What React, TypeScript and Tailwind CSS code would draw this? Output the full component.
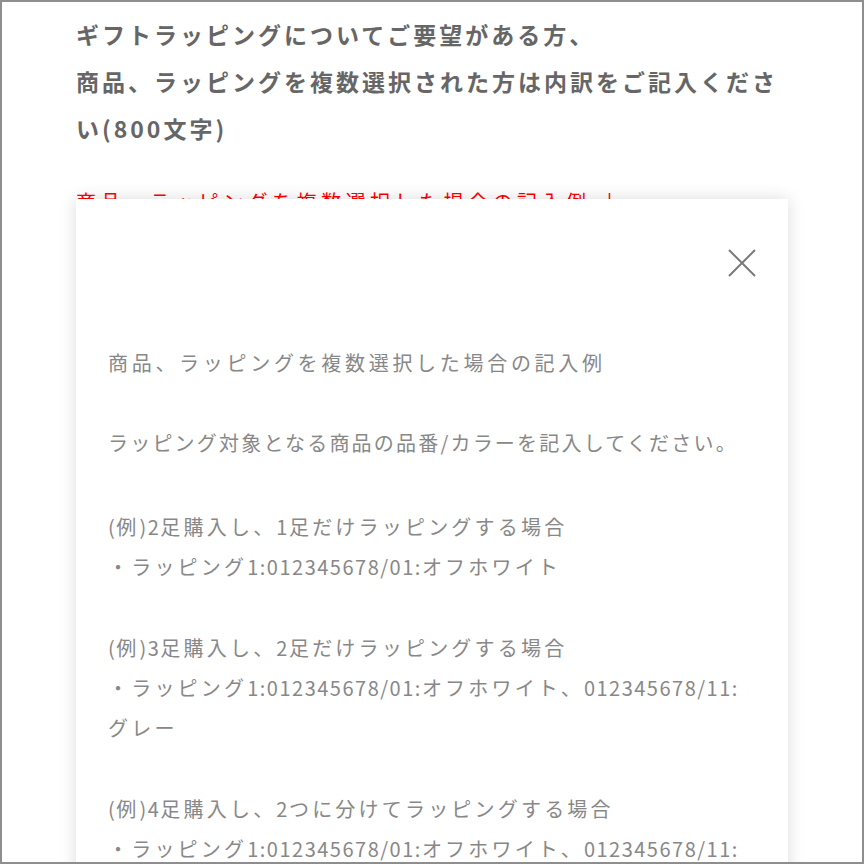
const jp = "font-['Noto_Sans_CJK_JP','Noto_Sans',sans-serif]";

function CloseIcon() {
  return (
    <svg width="28" height="28" viewBox="0 0 28 28" fill="none" aria-hidden="true">
      <path d="M1 1L27 27M27 1L1 27" stroke="#7a7a7a" strokeWidth="2" />
    </svg>
  );
}

// latin runs sit tighter than the kana around them
function Mixed({ text }: { text: string }) {
  const parts = text.split(/([\x21-\x7e]+)/);
  return (
    <>
      {parts.map((p, i) =>
        i % 2 === 1 ? (
          <span key={i} className="tracking-[1.5px]">
            {p}
          </span>
        ) : (
          p
        ),
      )}
    </>
  );
}

const examples = [
  {
    title: '(例)2足購入し、1足だけラッピングする場合',
    line: '・ラッピング1:012345678/01:オフホワイト',
  },
  {
    title: '(例)3足購入し、2足だけラッピングする場合',
    line: '・ラッピング1:012345678/01:オフホワイト、012345678/11:グレー',
  },
  {
    title: '(例)4足購入し、2つに分けてラッピングする場合',
    line: '・ラッピング1:012345678/01:オフホワイト、012345678/11:グレー',
  },
];

export default function App() {
  return (
    <div className={`relative h-[864px] w-[864px] overflow-hidden border-2 border-[#8e8e8e] bg-white ${jp}`}>
      <div className="w-[790px] pl-[74px] pt-[9px]">
        <h2 className="text-[23px] font-bold leading-[47px] tracking-[3px] text-[#666]">
          ギフトラッピングについてご要望がある方、
          <br />
          商品、ラッピングを複数選択された方は内訳をご記入ください(800文字)
        </h2>
        <p className="mt-[30px] text-[20px] leading-[40px] tracking-[4.5px] text-[#f00]">
          商品、ラッピングを複数選択した場合の記入例 ↓
        </p>
      </div>

      <div className="absolute left-[74px] top-[197px] h-[700px] w-[712px] bg-white shadow-[0_0_16px_rgba(0,0,0,0.14)]">
        <div className="flex justify-end pr-[32px] pt-[50px]">
          <button className="h-[28px] w-[28px]">
            <CloseIcon />
          </button>
        </div>
        <div className="px-[32px] pt-[66px] text-[20px] leading-[40px] text-[#888]">
          <p className="tracking-[3.7px]">商品、ラッピングを複数選択した場合の記入例</p>
          <p className="mt-[40px] tracking-[2.2px]">ラッピング対象となる商品の品番/カラーを記入してください。</p>
          {examples.map((ex, i) => (
            <div key={ex.title} className={`tracking-[3.2px] ${i === 0 ? 'mt-[44px]' : 'mt-[41px]'}`}>
              <p>
                <Mixed text={ex.title} />
              </p>
              <p>
                <Mixed text={ex.line} />
              </p>
            </div>
          ))}
        </div>
      </div>
    </div>
  );
}
